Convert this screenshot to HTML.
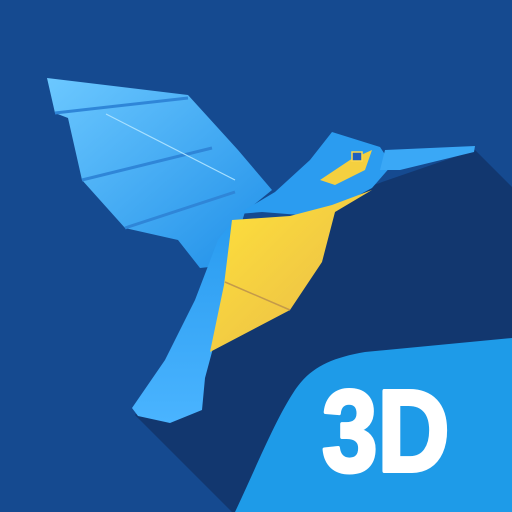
<!DOCTYPE html>
<html><head><style>
html,body{margin:0;padding:0;width:512px;height:512px;overflow:hidden;background:#154a90}
svg{display:block}
</style></head><body>
<svg width="512" height="512" viewBox="0 0 512 512" xmlns="http://www.w3.org/2000/svg">
<defs>
<linearGradient id="wing" x1="0" y1="0" x2="1" y2="1">
<stop offset="0" stop-color="#6cc8ff"/><stop offset="1" stop-color="#1f8fe8"/></linearGradient>
<linearGradient id="yel" x1="0" y1="0" x2="1" y2="1">
<stop offset="0" stop-color="#ffe23a"/><stop offset="1" stop-color="#e8b84a"/></linearGradient>
<linearGradient id="tail" x1="0" y1="0" x2="0" y2="1">
<stop offset="0" stop-color="#2a9cf0"/><stop offset="1" stop-color="#4ab4ff"/></linearGradient>
</defs>
<rect width="512" height="512" fill="#154a90"/>
<polygon points="475,150 512,187 512,512 232,512 135,415 330,200" fill="#12376f"/>
<path d="M235,512 C255,470 275,420 295,390 C310,368 330,358 365,352 L512,338 L512,512 Z" fill="#1e9be8"/>
<polygon points="47,78 188,95 238,150 272,190 245,212 228,265 200,268 178,240 125,228 82,180 68,118 55,113" fill="url(#wing)"/>
<polyline points="55,113 188,98" stroke="#2f86d8" stroke-width="3" fill="none"/>
<polyline points="82,180 212,148" stroke="#2f86d8" stroke-width="3" fill="none"/>
<polyline points="125,228 235,192" stroke="#2f86d8" stroke-width="3" fill="none"/>
<polyline points="106,114 235,180" stroke="#a8e0ff" stroke-width="1.2" fill="none"/>
<polygon points="230,225 226,285 212,352 205,378 202,410 170,423 138,416 132,408 165,360 195,300 218,240" fill="url(#tail)"/>
<polygon points="332,132 380,147 392,165 372,188 335,208 300,215 262,212 238,214 275,192 310,160" fill="#2b9cf0"/>
<polygon points="320,180 350,160 372,150 365,170 335,185" fill="#f4d040"/>
<rect x="352" y="152" width="10" height="9" fill="#1e5fc0" stroke="#ffd84a" stroke-width="1.5"/>
<polygon points="385,150 475,146 474,152 400,170 380,170" fill="#3aa8f6"/>
<polygon points="232,220 290,216 332,205 372,190 335,212 322,262 290,310 210,352 224,285" fill="url(#yel)"/>
<polyline points="225,282 290,310" stroke="#c49a4a" stroke-width="1.5" fill="none"/>
<text x="322" y="471" font-family="Liberation Sans, sans-serif" font-weight="bold" font-size="116" fill="#fff" stroke="#fff" stroke-width="4" stroke-linejoin="round" transform="translate(322 471) scale(0.86 1) translate(-322 -471)">3D</text>
</svg>
</body></html>
